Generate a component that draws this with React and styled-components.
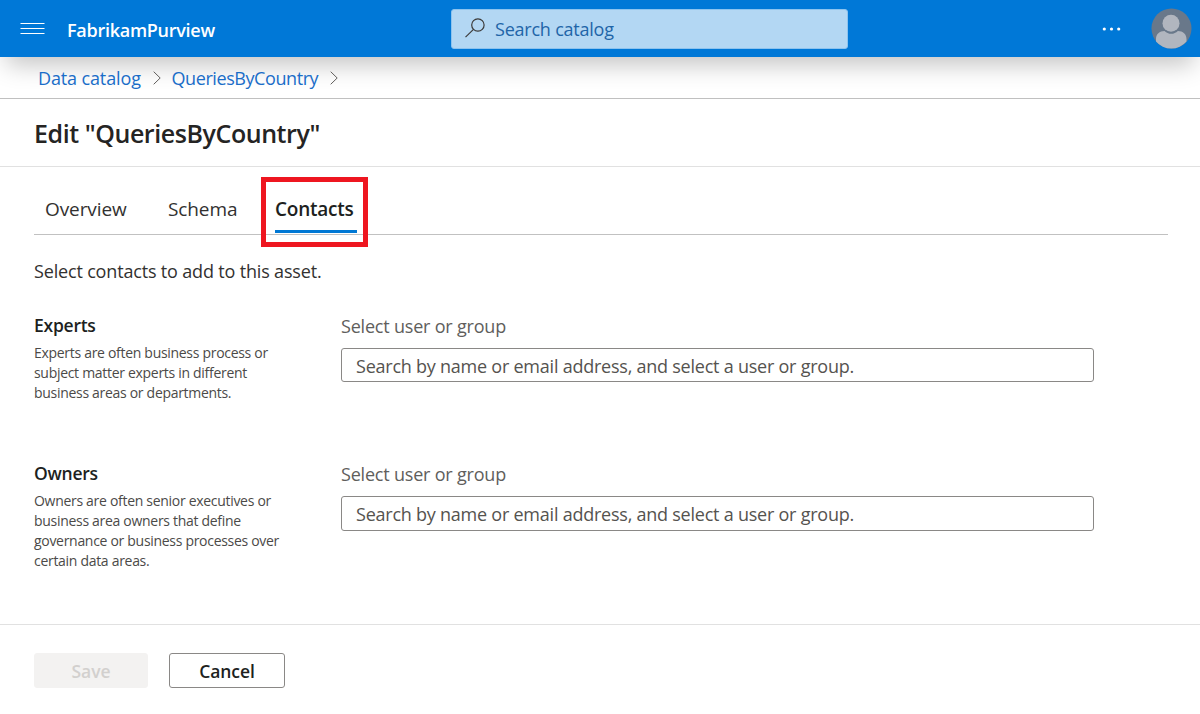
import React from "react";
import styled, { createGlobalStyle } from "styled-components";

const GlobalStyle = createGlobalStyle`
  *, *::before, *::after { box-sizing: border-box; }
  body {
    margin: 0;
    background: #fff;
    color: #323130;
    font-family: "Open Sans", "Noto Sans", sans-serif;
    font-size: 18px;
  }
  h1, h2, p { margin: 0; }
  button { font: inherit; }
`;

const Page = styled.div`
  display: flex;
  flex-direction: column;
  height: 714px;
  overflow: hidden;
`;

const TopBar = styled.header`
  display: grid;
  grid-template-columns: 451px 397px 1fr;
  align-items: center;
  flex: none;
  height: 57px;
  background: #0078d7;
  box-shadow: 0 14px 25px -6px rgba(0, 0, 0, 0.23);
`;

const Brand = styled.div`
  display: flex;
  align-items: center;
  padding: 2px 0 0 20px;
  gap: 22px;
  color: #fff;
  font-size: 18px;
  font-weight: 600;
  line-height: 24px;
  letter-spacing: -0.27px;
`;

const MenuIcon = styled.svg`
  display: block;
  width: 25px;
  height: 12px;
  margin-bottom: 1px;
`;

const SearchBox = styled.div`
  display: flex;
  align-items: center;
  height: 40px;
  padding-left: 13px;
  gap: 10px;
  border: 1px solid #8cc3ef;
  border-radius: 3px;
  background: #b3d7f3;
  color: #1f65a8;
  font-size: 18px;
  line-height: 24px;
  letter-spacing: -0.22px;
`;

const SearchIcon = styled.svg`
  width: 20px;
  height: 20px;
  margin-bottom: 2px;
`;

const Account = styled.div`
  display: flex;
  align-items: center;
  justify-content: flex-end;
  gap: 30px;
  padding-right: 8px;
`;

const Dots = styled.svg`
  width: 19px;
  height: 4px;
`;

const Avatar = styled.svg`
  width: 41px;
  height: 41px;
`;

const Breadcrumbs = styled.nav`
  display: flex;
  flex: none;
  align-items: center;
  height: 42px;
  padding-left: 38px;
  border-bottom: 1px solid #c0c0c0;
`;

const Crumb = styled.a`
  color: #1a6dc8;
  font-size: 18px;
  line-height: 24px;
  letter-spacing: ${(p) => p.$track}px;
  width: ${(p) => p.$width}px;
  white-space: nowrap;
`;

const Chevron = styled.svg`
  width: 8px;
  height: 14px;
  margin: 0 11px;
`;

const TitleBar = styled.div`
  flex: none;
  height: 68px;
  padding: 17px 34px 0;
  border-bottom: 1px solid #e1e1e1;
`;

const Title = styled.h1`
  color: #252423;
  font-size: 25px;
  font-weight: 600;
  line-height: 34px;
  letter-spacing: -0.43px;
`;

const Content = styled.main`
  flex: 1;
  padding: 10px 32px 0 34px;
`;

const Tabs = styled.div`
  display: flex;
  height: 58px;
  border-bottom: 1px solid #c1c1c1;
  font-size: 19px;
`;

const Tab = styled.div`
  width: ${(p) => p.$width}px;
  padding: 20px 0 0 11px;
  line-height: 24px;
  letter-spacing: -0.1px;
`;

const ActiveTab = styled.div`
  width: 107px;
  height: 70px;
  padding: 15px 9px 0;
  border: 5px solid #ee1620;
  font-weight: 600;
  line-height: 24px;
  color: #201f1e;
  letter-spacing: -0.25px;
`;

const TabLabel = styled.div`
  width: 82px;
  height: 36px;
  white-space: nowrap;
  border-bottom: 3px solid #0078d4;
`;

const Intro = styled.p`
  margin: 24px 0 30px;
  line-height: 24px;
  letter-spacing: -0.17px;
`;

const Section = styled.section`
  display: grid;
  grid-template-columns: 307px 753px;
  height: ${(p) => p.$height}px;
`;

const SectionTitle = styled.h2`
  color: #201f1e;
  font-size: 17.5px;
  font-weight: 600;
  line-height: 24px;
  letter-spacing: -0.25px;
`;

const Description = styled.p`
  margin-top: 6px;
  color: #4b4a48;
  font-size: 14px;
  line-height: 20px;
  letter-spacing: -0.3px;
  white-space: pre-line;
`;

const Label = styled.label`
  display: block;
  padding-top: 1px;
  color: #605e5c;
  line-height: 24px;
  letter-spacing: -0.2px;
`;

const PeopleField = styled.div`
  height: ${(p) => p.$height}px;
  margin-top: 10px;
  padding: 5px 14px 0;
  border: 1px solid #8a8886;
  border-radius: 3px;
  color: #55534f;
  line-height: 24px;
  letter-spacing: -0.235px;
`;

const Footer = styled.footer`
  display: flex;
  flex: none;
  justify-content: flex-start;
  gap: 21px;
  height: 90px;
  padding: 28px 34px 0;
  border-top: 1px solid #e1e1e1;
`;

const Button = styled.button`
  width: ${(p) => (p.disabled ? 114 : 116)}px;
  height: 35px;
  padding: 1px 0 0;
  border: 1px solid ${(p) => (p.disabled ? "#f3f2f1" : "#8a8886")};
  border-radius: 3px;
  background: ${(p) => (p.disabled ? "#f3f2f1" : "#fff")};
  color: ${(p) => (p.disabled ? "#d2d0ce" : "#201f1e")};
  font-size: 17.5px;
  font-weight: 600;
  letter-spacing: -0.1px;
`;

const sections = [
  {
    title: "Experts",
    height: 148,
    fieldHeight: 34,
    text: "Experts are often business process or\nsubject matter experts in different\nbusiness areas or departments.",
  },
  {
    title: "Owners",
    height: 120,
    fieldHeight: 35,
    text: "Owners are often senior executives or\nbusiness area owners that define\ngovernance or business processes over\ncertain data areas.",
  },
];

const ChevronRight = () => (
  <Chevron viewBox="0 0 8 14" fill="none" stroke="#605e5c" strokeWidth="1">
    <path d="M.7.7 7.2 7 .7 13.3" />
  </Chevron>
);

export default function App() {
  return (
    <Page>
      <GlobalStyle />
      <TopBar>
        <Brand>
          <MenuIcon viewBox="0 0 25 12" stroke="#fff">
            <path d="M.5.5h24M.5 5.5h24M.5 10.5h24" />
          </MenuIcon>
          <span>FabrikamPurview</span>
        </Brand>
        <SearchBox>
          <SearchIcon viewBox="0 0 20 20" fill="none" stroke="#3b3a39" strokeWidth="1.2">
            <circle cx="12.9" cy="7" r="6.2" />
            <path d="M8.5 11.4.5 19.1" />
          </SearchIcon>
          <span>Search catalog</span>
        </SearchBox>
        <Account>
          <Dots viewBox="0 0 19 4" fill="#fff">
            <circle cx="2.3" cy="2" r="1.6" />
            <circle cx="9.5" cy="2" r="1.6" />
            <circle cx="16.7" cy="2" r="1.6" />
          </Dots>
          <Avatar viewBox="0 0 41 41">
            <circle cx="20.5" cy="20.5" r="20" fill="#69788a" />
            <circle cx="20" cy="15.2" r="8.5" fill="#b1b6bf" />
            <path
              d="M5 33.5V31c0-5 3.5-8 8.5-8 2 1.9 4.2 2.8 6.700 2.800s4.700-.9 6.700-2.800c5 0 8.600 3 8.600 8v2.500a20 20 0 0 1-30.500 0Z"
              fill="#b1b6bf"
            />
          </Avatar>
        </Account>
      </TopBar>
      <Breadcrumbs>
        <Crumb $width={103.5} $track={-0.13}>Data catalog</Crumb>
        <ChevronRight />
        <Crumb $width={147.5} $track={-0.42}>QueriesByCountry</Crumb>
        <ChevronRight />
      </Breadcrumbs>
      <TitleBar>
        <Title>Edit "QueriesByCountry"</Title>
      </TitleBar>
      <Content>
        <Tabs>
          <Tab $width={123}>Overview</Tab>
          <Tab $width={104}>Schema</Tab>
          <ActiveTab>
            <TabLabel>Contacts</TabLabel>
          </ActiveTab>
        </Tabs>
        <Intro>Select contacts to add to this asset.</Intro>
        {sections.map((s) => (
          <Section key={s.title} $height={s.height}>
            <div>
              <SectionTitle>{s.title}</SectionTitle>
              <Description>{s.text}</Description>
            </div>
            <div>
              <Label>Select user or group</Label>
              <PeopleField $height={s.fieldHeight}>
                Search by name or email address, and select a user or group.
              </PeopleField>
            </div>
          </Section>
        ))}
      </Content>
      <Footer>
        <Button disabled>Save</Button>
        <Button>Cancel</Button>
      </Footer>
    </Page>
  );
}
